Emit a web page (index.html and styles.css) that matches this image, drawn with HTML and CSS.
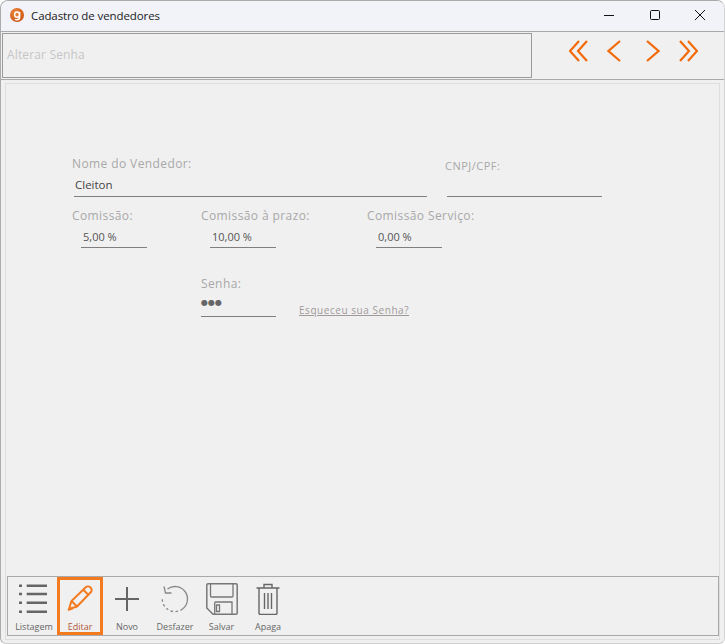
FILE: index.html
```html
<!DOCTYPE html>
<html lang="pt">
<head>
<meta charset="utf-8">
<title>Cadastro de vendedores</title>
<link rel="stylesheet" href="styles.css">
</head>
<body>
<div class="window">
  <header class="titlebar">
    <svg class="app-icon" width="16" height="16" viewBox="0 0 16 16"><defs><radialGradient id="ag" cx="0.4" cy="0.35" r="0.75"><stop offset="0" stop-color="#f08a3c"/><stop offset="1" stop-color="#c8500f"/></radialGradient></defs><circle cx="8" cy="8" r="7" fill="url(#ag)"/><path d="M10.6 5v5.2c0 1.7-1 2.5-2.700 2.500-.8 0-1.400-.1-2-.4M10.400 7.600c0 1.500-1 2.600-2.400 2.600S5.600 9.100 5.600 7.600 6.600 5 8 5s2.400 1.100 2.400 2.600z" fill="none" stroke="#fff" stroke-width="1.500"/></svg>
    <span class="title">Cadastro de vendedores</span>
    <div class="winctl">
      <svg width="12" height="12" viewBox="0 0 12 12"><path d="M1 6.500h10" stroke="#111" stroke-width="1"/></svg>
      <svg width="12" height="12" viewBox="0 0 12 12"><rect x="1.500" y="1.500" width="9" height="9" rx="1" fill="none" stroke="#111" stroke-width="1"/></svg>
      <svg width="12" height="12" viewBox="0 0 12 12"><path d="M1 1l10 10M11 1L1 11" stroke="#111" stroke-width="1"/></svg>
    </div>
  </header>
  <div class="topbar">
    <div class="caption">Alterar Senha</div>
    <nav class="pager">
      <svg width="20" height="22" viewBox="0 0 20 22"><path d="M10 1L1 11l9 10M18 1L9 11l9 10" class="chev"/></svg>
      <svg width="14" height="22" viewBox="0 0 14 22"><path d="M13 1L1.500 11 13 21" class="chev"/></svg>
      <svg class="next" width="14" height="22" viewBox="0 0 14 22"><path d="M1 1l11.500 10L1 21" class="chev"/></svg>
      <svg width="20" height="22" viewBox="0 0 20 22"><path d="M10 1l9 10-9 10M2 1l9 10-9 10" class="chev"/></svg>
    </nav>
  </div>
  <main class="panel">
    <section class="form">
      <div class="row row-1">
        <div class="field f-nome"><label>Nome do Vendedor:</label><div class="input">Cleiton</div></div>
        <div class="field f-cnpj"><label>CNPJ/CPF:</label><div class="input"></div></div>
      </div>
      <div class="row row-2">
        <div class="field f-com"><label>Comissão:</label><div class="input small">5,00 %</div></div>
        <div class="field f-prazo"><label>Comissão à prazo:</label><div class="input small">10,00 %</div></div>
        <div class="field f-serv"><label>Comissão Serviço:</label><div class="input small">0,00 %</div></div>
      </div>
      <div class="row row-3">
        <div class="field f-senha"><label>Senha:</label><div class="input pass">●●●</div></div>
        <a class="forgot">Esqueceu sua Senha?</a>
      </div>
    </section>
    <footer class="toolbar">
      <button class="tool t-list">
        <svg width="30" height="32" viewBox="0 0 30 32"><path d="M0 2.700h3M7.700 2.700H28M0 11h3M7.700 11H28M0 19.700h3M7.700 19.700H28M0 28.700h3M7.700 28.700H28" stroke="#666" stroke-width="2.600"/></svg>
        <span>Listagem</span>
      </button>
      <button class="tool t-edit active">
        <svg width="28" height="32" viewBox="0 0 28 32"><path d="M3 26l2.500-8L19.500 4.500c1.500-1.500 3.500-1.500 5 0s1.500 3.500 0 5L11 23.500zM17.500 7l5.500 5.500M5.500 18l5.500 5.500" fill="none" stroke="#f47a20" stroke-width="2"/><path d="M2 28l1.500-5 3.500 3.500z" fill="#f47a20"/></svg>
        <span>Editar</span>
      </button>
      <button class="tool t-novo">
        <svg width="26" height="32" viewBox="0 0 26 32"><path d="M13 4v24M1 16h24" stroke="#666" stroke-width="2"/></svg>
        <span>Novo</span>
      </button>
      <button class="tool t-desf">
        <svg width="28" height="32" viewBox="0 0 28 32"><path d="M6.500 6A12.500 12.500 0 1 1 21.500 26" fill="none" stroke="#888" stroke-width="1.300"/><path d="M21.500 26A12.500 12.500 0 0 1 1.500 14" fill="none" stroke="#888" stroke-width="1.300" stroke-dasharray="2.500 2.500"/><path d="M3 3.500l1.500 6.500H10.500" fill="none" stroke="#888" stroke-width="1.300"/></svg>
        <span>Desfazer</span>
      </button>
      <button class="tool t-salv">
        <svg width="32" height="32" viewBox="0 0 32 32"><path d="M2 .8h28a1.200 1.200 0 0 1 1.200 1.200v28a1.200 1.200 0 0 1-1.200 1.200H7L.8 25V2A1.200 1.200 0 0 1 2 .8z" fill="none" stroke="#777" stroke-width="1.500"/><path d="M4.500.8V13a1 1 0 0 0 1 1H26a1 1 0 0 0 1-1V.8M8.700 31V20a1 1 0 0 1 1-1H26v12M10.500 22h3v6.500h-3z" fill="none" stroke="#777" stroke-width="1.300"/></svg>
        <span>Salvar</span>
      </button>
      <button class="tool t-apaga">
        <svg width="24" height="32" viewBox="0 0 24 32"><path d="M.5 5h23M8 4.500V1.500h8v3M3 5v25a1.500 1.500 0 0 0 1.500 1.500h15A1.500 1.500 0 0 0 21 30V5M8.500 10v16M12 10v16M15.500 10v16" fill="none" stroke="#666" stroke-width="1.400"/></svg>
        <span>Apaga</span>
      </button>
    </footer>
  </main>
</div>
</body>
</html>
```
FILE: styles.css
```css
* { box-sizing: border-box; }
html, body { margin: 0; height: 100%; background: #fff; }
body { font-family: "Open Sans", "Noto Sans", sans-serif; overflow: hidden; }
.window {
  width: 725px; height: 644px;
  display: flex; flex-direction: column;
  background: #f0f0f0;
  border: 1px solid #ababab;
  border-right-color: #d4d4d4;
  border-bottom-color: #cfcfcf;
  border-radius: 8px 8px 6px 6px;
  overflow: hidden;
}
.titlebar {
  height: 30px; flex: none;
  display: flex; align-items: center;
  background: #f1f3f9;
  padding: 0 0 2px 8px;
}
.app-icon { flex: none; }
.title { margin-left: 6px; font-size: 11.500px; color: #1a1a1a; letter-spacing: -0.1px; }
.winctl { margin-left: auto; display: flex; gap: 33.500px; padding-right: 18px; align-items: center; }
.winctl svg { display: block; }
.topbar {
  height: 49px; flex: none;
  display: flex;
  border-top: 1px solid #a9a9a9;
  border-bottom: 1px solid #a9a9a9;
  padding: 1px 0 0 1px;
  background: #f0f0f0;
}
.caption {
  width: 530px; height: 45px;
  border: 1px solid #9b9b9b;
  display: flex; align-items: center;
  padding: 0 0 2px 4px;
  font-size: 12px; color: #c6c6c6; letter-spacing: 0.15px;
}
.pager { display: flex; align-items: flex-start; padding: 7px 0 0 37px; gap: 18px; }
.pager svg { display: block; }
.pager .next { margin-left: 7px; }
.chev { fill: none; stroke: #f26a0a; stroke-width: 2.200; }
.panel {
  flex: 1; margin: 3px 4px 3px 4px;
  display: flex; flex-direction: column;
  border: 1px solid #dedede;
  min-height: 0;
}
.form { flex: 1; padding: 72px 0 0 0; }
.row { display: flex; align-items: flex-start; }
.row-1 { padding-left: 66px; }
.row-2 { padding-left: 66px; margin-top: 11px; }
.row-3 { padding-left: 195px; margin-top: 28px; }
.field label { display: block; font-size: 12px; line-height: 16px; color: #a8a8a8; white-space: nowrap; letter-spacing: 0.4px; }
.input { border-bottom: 1px solid #7f7f7f; font-size: 11px; color: #555; }
.f-nome { width: 355px; }
.f-nome .input { margin-left: 2px; height: 25px; line-height: 26px; padding-left: 1px; color: #444; font-size: 11.500px; }
.f-cnpj { margin-left: 18px; }
.f-cnpj label { font-size: 11px; margin-top: 2px; letter-spacing: 0.5px; }
.f-cnpj .input { margin-left: 2px; width: 155px; height: 23px; }
.f-com { width: 129px; }
.f-prazo { width: 166px; }
.input.small { margin-left: 9px; width: 66px; height: 24px; line-height: 26px; padding-left: 2px; }
.f-senha { width: 98px; }
.f-senha .input { width: 75px; height: 25px; }
.input.pass { font-size: 8px; line-height: 22px; color: #666; font-family: "DejaVu Sans", sans-serif; }
.forgot { font-size: 10px; color: #a19a9a; text-decoration: underline; margin-top: 27px; white-space: nowrap; letter-spacing: 0.55px; }
.toolbar {
  height: 60px; flex: none;
  display: flex; align-items: stretch;
  margin: 0 0 3px 1px;
  border: 1px solid #a9a9a9;
}
.tool {
  all: unset;
  box-sizing: border-box;
  display: flex; flex-direction: column; align-items: center;
  padding-top: 6px;
  height: 58px;
  font-size: 9px; color: #666;
  font-family: "Open Sans", sans-serif;
}
.tool svg { display: block; height: 32px; flex: none; }
.tool span { margin-top: 5px; line-height: 13px; }
.t-list { width: 49px; padding-left: 3px; }
.active { width: 46px; border: 3px solid #f47a20; padding-top: 3px; color: #b0583a; }
.t-novo { width: 48px; }
.t-desf { width: 48px; }
.t-salv { width: 45px; }
.t-apaga { width: 48px; }
```
